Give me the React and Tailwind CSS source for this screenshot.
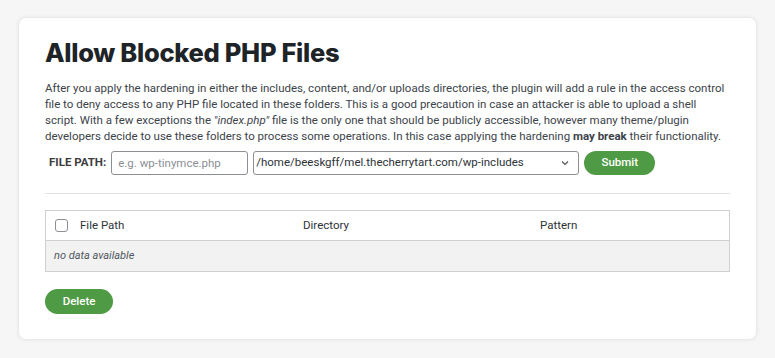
import React from "react";

export default function App() {
  return (
    <div className="min-h-[358px] w-[775px] bg-[#f6f6f6] pt-[18px] pl-[19px]" style={{ fontFamily: "Roboto, 'Noto Sans', sans-serif" }}>
      <div className="w-[737px] h-[321px] rounded-[7px] bg-white shadow-[0_0_4px_rgba(0,0,0,0.12)] px-[26px] pt-[19px]">
        <h1 className="text-[25.5px] leading-[32px] font-extrabold text-[#1d2327] tracking-[-0.3px]" style={{ fontFamily: "Inter, sans-serif" }}>Allow Blocked PHP Files</h1>
        <p className="mt-[11px] text-[11.5px] leading-[16px] text-[#3c434a] whitespace-nowrap">
          After you apply the hardening in either the includes, content, and/or uploads directories, the plugin will add a rule in the access control<br />
          file to deny access to any PHP file located in these folders. This is a good precaution in case an attacker is able to upload a shell<br />
          script. With a few exceptions the <em>"index.php"</em> file is the only one that should be publicly accessible, however many theme/plugin<br />
          developers decide to use these folders to process some operations. In this case applying the hardening <strong>may break</strong> their functionality.
        </p>
        <div className="mt-[7px] flex items-center h-[24px]">
          <span className="ml-[4px] mr-[5px] text-[11.5px] font-bold text-[#3c3c3c]">FILE PATH:</span>
          <input
            className="w-[137px] h-[24px] rounded-[3px] border border-[#8c8f94] px-[6px] text-[11.5px] text-[#2c3338] placeholder:text-[#8c8f94] outline-none"
            placeholder="e.g. wp-tinymce.php"
          />
          <div className="ml-[5px] w-[326px] h-[24px] rounded-[3px] border border-[#8c8f94] flex items-center justify-between pl-[2px] pr-[8px] text-[11.5px] text-[#2c3338]">
            <span>/home/beeskgff/mel.thecherrytart.com/wp-includes</span>
            <svg width="10" height="10" viewBox="0 0 10 10" fill="none" stroke="#555" strokeWidth="1.2"><path d="M2 3.5 L5 6.5 L8 3.5" /></svg>
          </div>
          <button className="ml-[5px] w-[71px] h-[24px] rounded-full bg-[#4f9a44] text-white text-[11.5px] font-medium">Submit</button>
        </div>
        <div className="mt-[18px] h-px bg-[#e2e2e2]" />
        <div className="mt-[16px] border border-[#d0d0d0]">
          <div className="h-[30px] flex items-center border-b border-[#d0d0d0] text-[11.5px] text-[#2c3338]">
            <span className="ml-[9px] w-[13px] h-[13px] rounded-[3px] border border-[#8c8f94] bg-white" />
            <span className="ml-[12px] w-[223px]">File Path</span>
            <span className="w-[237px]">Directory</span>
            <span>Pattern</span>
          </div>
          <div className="h-[30px] flex items-center bg-[#f2f2f2] pl-[8px] text-[11px] italic text-[#50575e]">no data available</div>
        </div>
        <button className="mt-[17px] w-[68px] h-[25px] rounded-full bg-[#4f9a44] text-white text-[11.5px] font-medium">Delete</button>
      </div>
    </div>
  );
}
